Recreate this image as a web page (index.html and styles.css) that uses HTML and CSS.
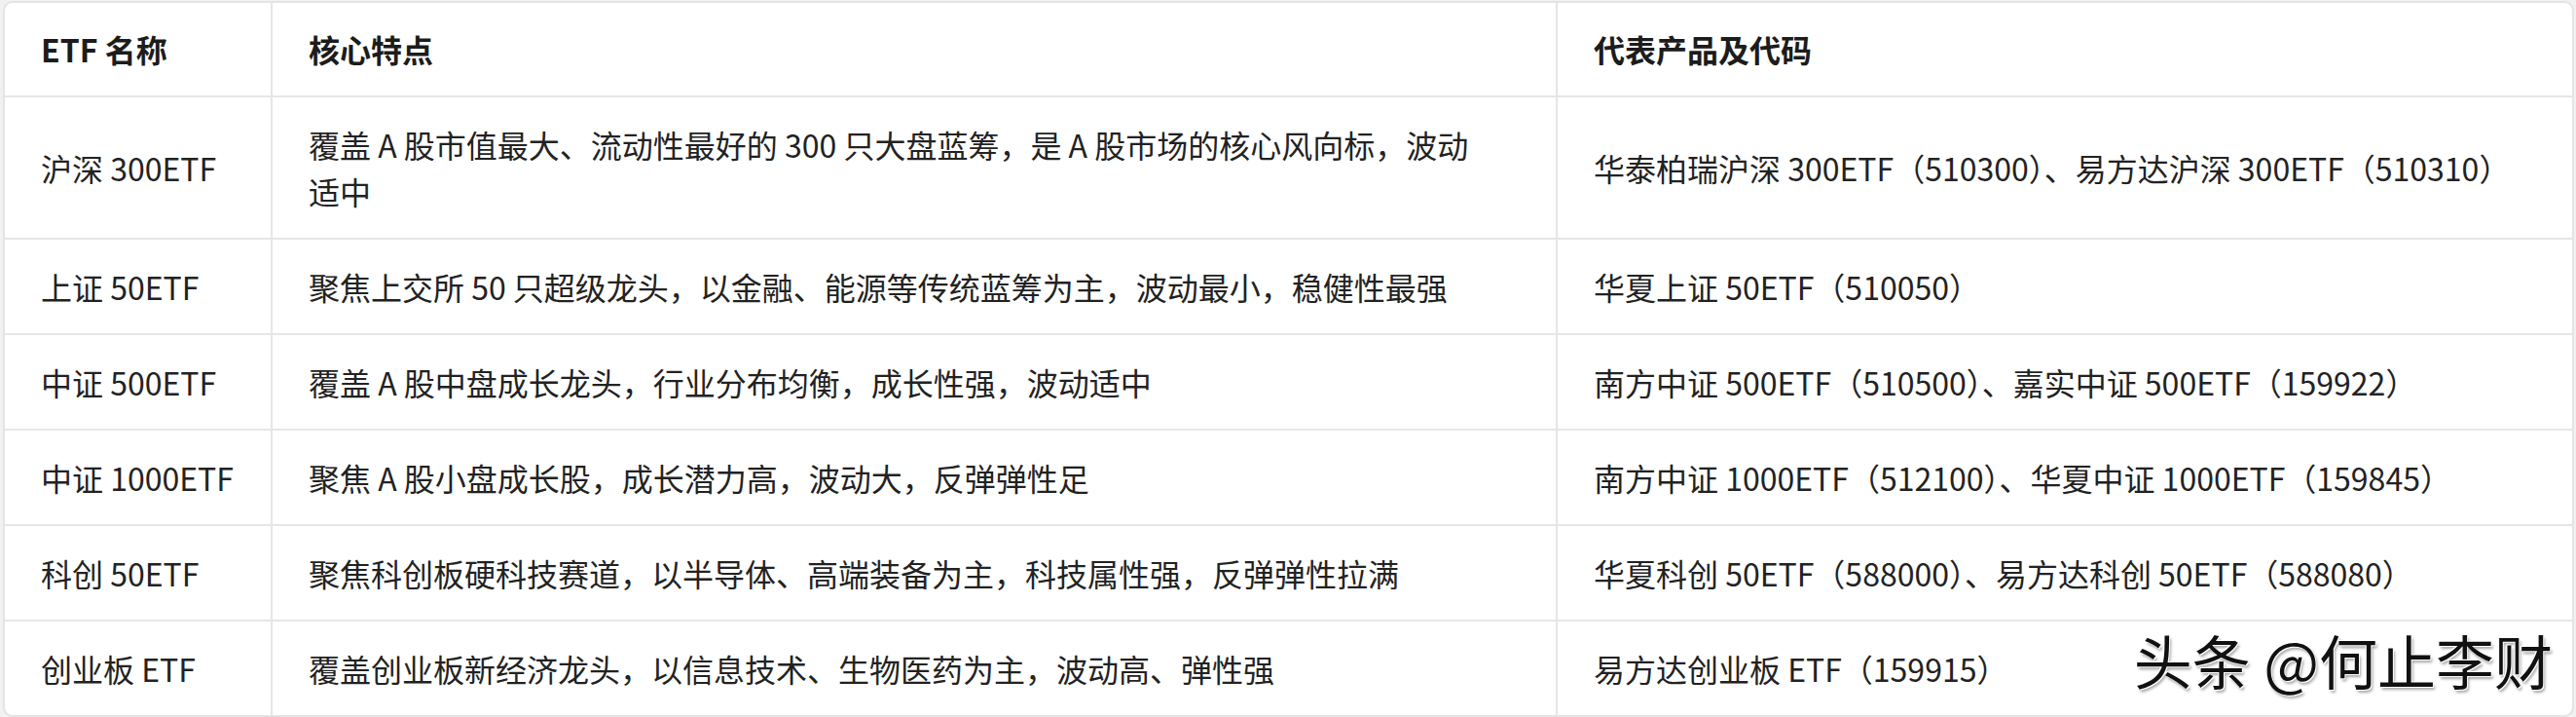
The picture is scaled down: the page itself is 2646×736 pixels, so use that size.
FILE: index.html
```html
<!DOCTYPE html>
<html lang="zh-CN">
<head>
<meta charset="utf-8">
<title>ETF</title>
<link rel="stylesheet" href="styles.css">
</head>
<body>
<div class="frame">
  <table class="etf">
    <colgroup>
      <col class="c1"><col class="c2"><col class="c3">
    </colgroup>
    <thead>
      <tr><th>ETF 名称</th><th>核心特点</th><th>代表产品及代码</th></tr>
    </thead>
    <tbody>
      <tr><td>沪深 300ETF</td><td>覆盖 A 股市值最大、流动性最好的 300 只大盘蓝筹，是 A 股市场的核心风向标，波动适中</td><td>华泰柏瑞沪深 300ETF（510300）、易方达沪深 300ETF（510310）</td></tr>
      <tr><td>上证 50ETF</td><td>聚焦上交所 50 只超级龙头，以金融、能源等传统蓝筹为主，波动最小，稳健性最强</td><td>华夏上证 50ETF（510050）</td></tr>
      <tr><td>中证 500ETF</td><td>覆盖 A 股中盘成长龙头，行业分布均衡，成长性强，波动适中</td><td>南方中证 500ETF（510500）、嘉实中证 500ETF（159922）</td></tr>
      <tr><td>中证 1000ETF</td><td>聚焦 A 股小盘成长股，成长潜力高，波动大，反弹弹性足</td><td>南方中证 1000ETF（512100）、华夏中证 1000ETF（159845）</td></tr>
      <tr><td>科创 50ETF</td><td>聚焦科创板硬科技赛道，以半导体、高端装备为主，科技属性强，反弹弹性拉满</td><td>华夏科创 50ETF（588000）、易方达科创 50ETF（588080）</td></tr>
      <tr><td>创业板 ETF</td><td>覆盖创业板新经济龙头，以信息技术、生物医药为主，波动高、弹性强</td><td>易方达创业板 ETF（159915）</td></tr>
    </tbody>
  </table>
  <div class="watermark">头条 @何止李财</div>
</div>
</body>
</html>
```
FILE: styles.css
```css
html, body {
  margin: 0;
  padding: 0;
}
body {
  background: #f1f1f1;
  padding: 1px 2px 0 3px;
  width: 2646px;
  height: 736px;
  box-sizing: border-box;
  overflow: hidden;
  font-family: "Noto Sans CJK SC", "Noto Sans", sans-serif;
}
.frame {
  position: relative;
  background: #fff;
  border: 2px solid #e4e4e4;
  border-radius: 10px;
  overflow: hidden;
}
.etf {
  width: 100%;
  table-layout: fixed;
  border-collapse: separate;
  border-spacing: 0;
  color: #222;
}
.c1 { width: 275px; }
.c2 { width: 1320px; }
.etf th, .etf td {
  text-align: left;
  vertical-align: middle;
  font-size: 32px;
  line-height: 48px;
  padding: 24px 8px 24px 37px;
  border-right: 2px solid #e6e6e6;
  border-bottom: 2px solid #e6e6e6;
}
.etf th:nth-child(2), .etf td:nth-child(2) {
  padding-right: 66px;
}
.etf th {
  font-weight: 700;
  color: #1c1c1c;
  padding-top: 23px;
}
.etf th:last-child, .etf td:last-child {
  border-right: none;
}
.etf tbody tr:last-child td {
  border-bottom: none;
}
.watermark {
  position: absolute;
  right: 20px;
  top: 644px;
  font-size: 60px;
  line-height: 1;
  color: #111;
  white-space: nowrap;
  text-shadow: -1px -1px 0 #fff, 1px 1px 0 #fff, 2px 3px 3px rgba(0,0,0,0.35);
}
```
